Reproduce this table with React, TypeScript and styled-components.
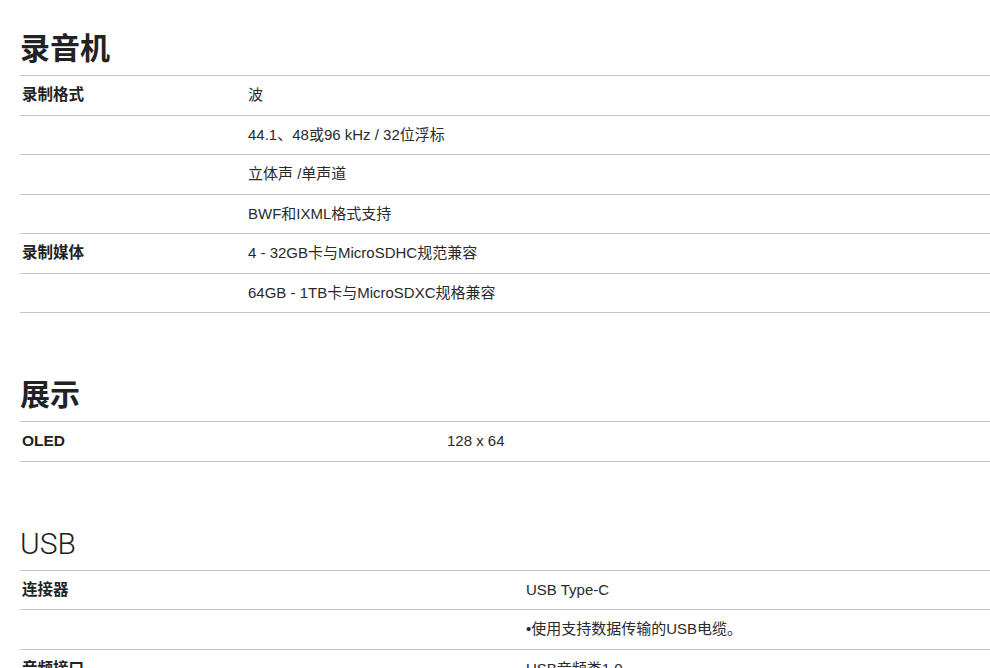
import React from "react";
import styled, { createGlobalStyle } from "styled-components";

const GlobalStyle = createGlobalStyle`
  html, body {
    margin: 0;
    padding: 0;
    background: #ffffff;
    overflow: hidden;
  }
  body {
    font-family: "Liberation Sans", Arial, "Noto Sans CJK SC", sans-serif;
    color: #222222;
  }
`;

const Page = styled.div`
  padding: 31px 0 0 20px;
  display: flex;
  flex-direction: column;
`;

const Section = styled.section`
  display: flex;
  flex-direction: column;
  & + & {
    margin-top: 64px;
  }
`;

const Heading = styled.h2<{ $light?: boolean }>`
  margin: 0 0 8px 0;
  font-family: ${(p) =>
    p.$light
      ? `Roboto, "Noto Sans CJK SC", sans-serif`
      : `"Liberation Sans", Arial, "Noto Sans CJK SC", sans-serif`};
  font-size: 30px;
  font-weight: ${(p) => (p.$light ? 300 : 700)};
  line-height: 36px;
  color: #222222;
`;

const Table = styled.div`
  border-top: 1px solid #c4c4c4;
  display: flex;
  flex-direction: column;
`;

const Row = styled.div<{ $labelWidth: number }>`
  display: grid;
  grid-template-columns: ${(p) => p.$labelWidth}px 1fr;
  border-bottom: 1px solid #c4c4c4;
  height: 38.5px;
  align-items: center;
`;

const Label = styled.div`
  padding-left: 2px;
  font-family: "Liberation Sans", Arial, "Noto Sans CJK SC", sans-serif;
  font-size: 15.5px;
  font-weight: 700;
  line-height: 20px;
`;

const Value = styled.div`
  padding-left: 2px;
  font-family: "Liberation Sans", Arial, "Noto Sans CJK SC", sans-serif;
  font-size: 15px;
  font-weight: 400;
  line-height: 20px;
  color: #2a2a2a;
`;

type Spec = { label?: string; value: string };

const sections: {
  title: string;
  light?: boolean;
  labelWidth: number;
  rows: Spec[];
}[] = [
  {
    title: "录音机",
    labelWidth: 226,
    rows: [
      { label: "录制格式", value: "波" },
      { value: "44.1、48或96 kHz / 32位浮标" },
      { value: "立体声 /单声道" },
      { value: "BWF和IXML格式支持" },
      { label: "录制媒体", value: "4 - 32GB卡与MicroSDHC规范兼容" },
      { value: "64GB - 1TB卡与MicroSDXC规格兼容" },
    ],
  },
  {
    title: "展示",
    labelWidth: 425,
    rows: [{ label: "OLED", value: "128 x 64" }],
  },
  {
    title: "USB",
    light: true,
    labelWidth: 504,
    rows: [
      { label: "连接器", value: "USB Type-C" },
      { value: "•使用支持数据传输的USB电缆。" },
      { label: "音频接口", value: "USB音频类1.0" },
    ],
  },
];

export default function App() {
  return (
    <>
      <GlobalStyle />
      <Page>
        {sections.map((s) => (
          <Section key={s.title}>
            <Heading $light={s.light}>{s.title}</Heading>
            <Table>
              {s.rows.map((r, i) => (
                <Row key={i} $labelWidth={s.labelWidth}>
                  <Label>{r.label ?? ""}</Label>
                  <Value>{r.value}</Value>
                </Row>
              ))}
            </Table>
          </Section>
        ))}
      </Page>
    </>
  );
}
